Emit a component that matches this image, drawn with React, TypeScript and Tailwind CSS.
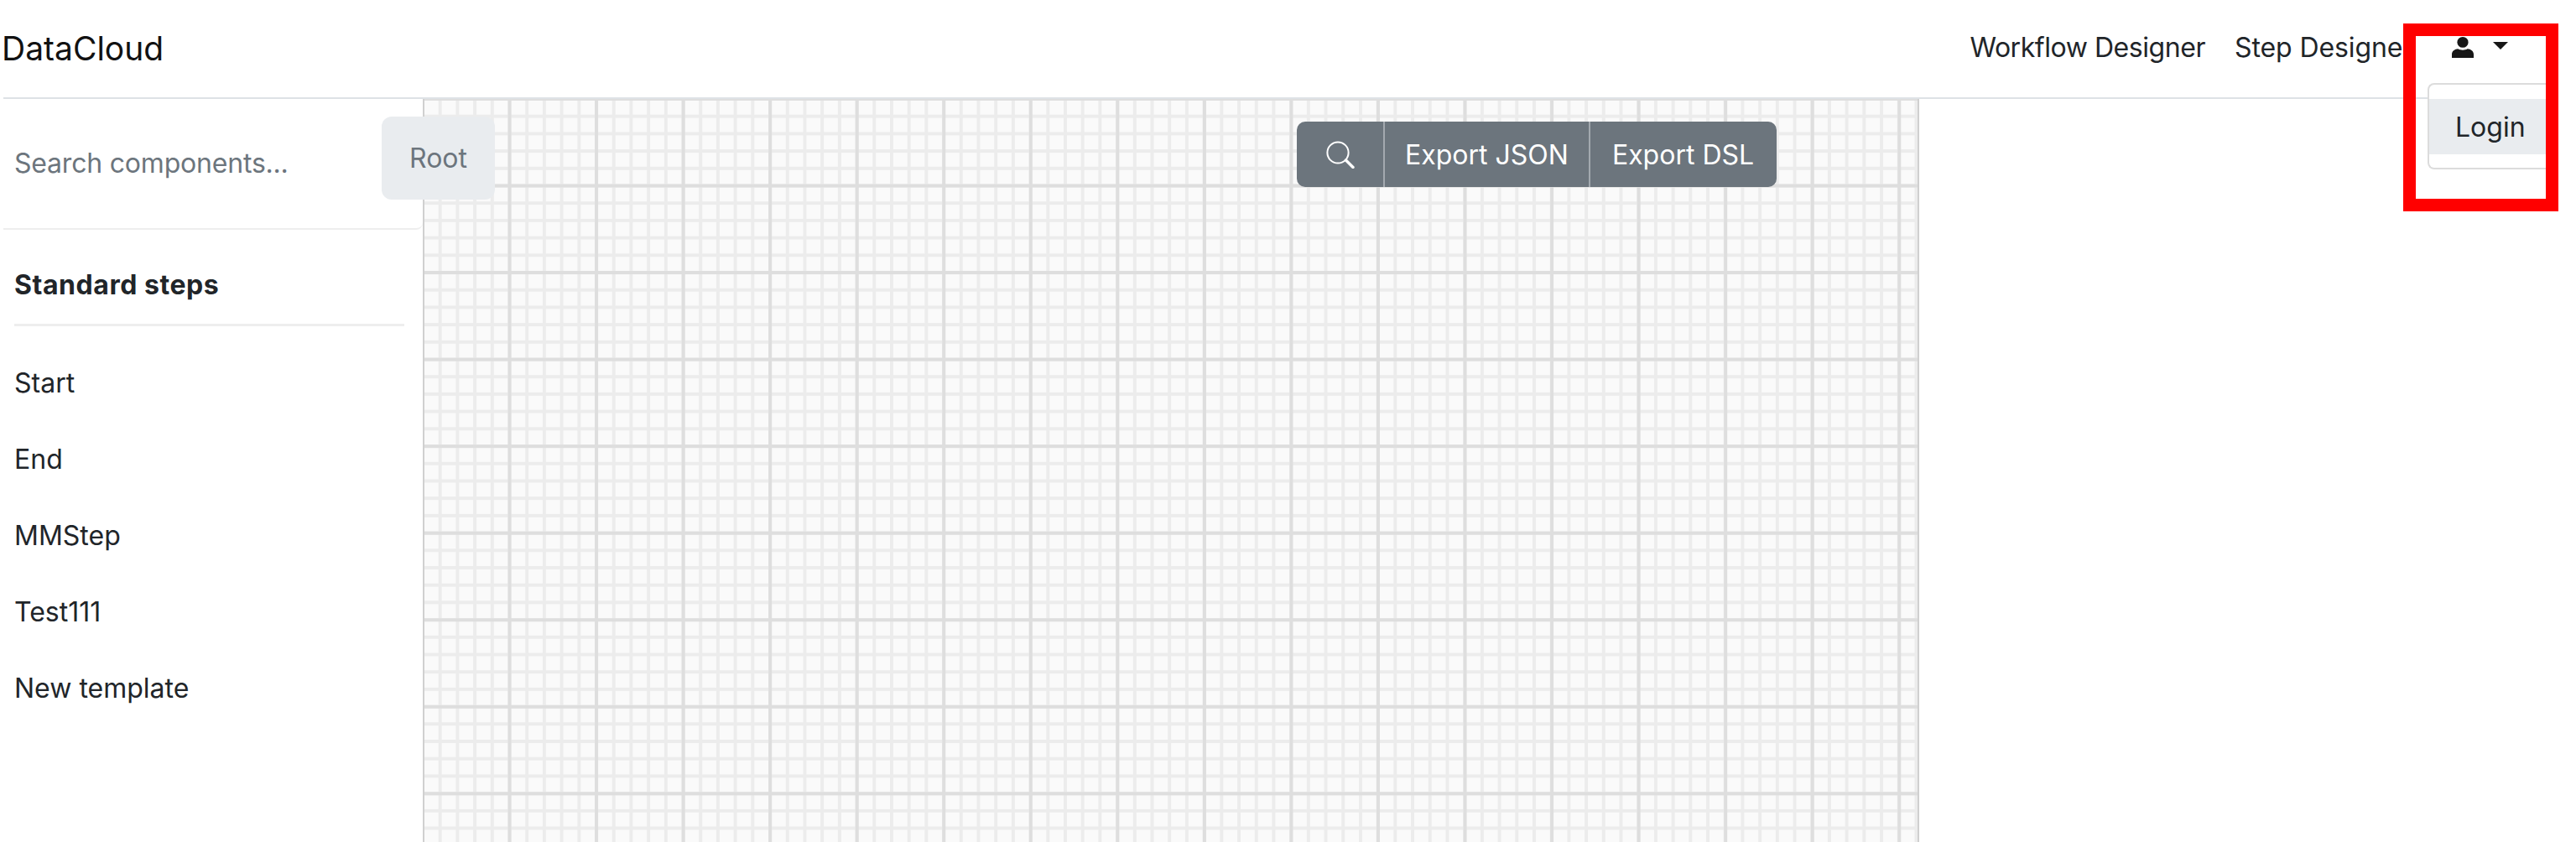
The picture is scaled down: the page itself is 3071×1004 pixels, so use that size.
import React from 'react';

const steps = ['Start', 'End', 'MMStep', 'Test111', 'New template'];

const PersonIcon = () => (
  <svg className="w-[26px] h-[25px] text-[#171717]" viewBox="0 0 26 25" fill="currentColor">
    <ellipse cx="13" cy="6.4" rx="6.6" ry="6.4" />
    <path d="M0 25v-4.2C0 17 3.4 14.6 7.4 14.3c1.6 1 3.5 1.4 5.6 1.4s4-.4 5.6-1.4c4 .3 7.4 2.7 7.4 6.5V25z" />
  </svg>
);

const Caret = () => (
  <svg className="w-[18px] h-[9px] text-[#171717]" viewBox="0 0 18 9" fill="currentColor">
    <path d="M0 0h18L9 9z" />
  </svg>
);

const SearchIcon = () => (
  <svg className="w-[34px] h-[33px] text-white" viewBox="0 0 34 33" fill="none" stroke="currentColor">
    <circle cx="14" cy="14" r="12.6" strokeWidth="2" />
    <path d="M23.5 23l8.5 8.5" strokeWidth="3.4" strokeLinecap="round" />
  </svg>
);

const Navbar = () => (
  <nav className="h-[118px] mr-[21px] pr-[60px] flex items-center justify-between border-b-2 border-[#dee2e6]">
    <span className="text-[39px] leading-none text-[#111] -ml-[2px] -mt-[1px]">DataCloud</span>
    <div className="flex items-center -mt-[2px]">
      <a className="text-[32px] tracking-[-0.45px] text-[#212529] mr-[35px]">Workflow Designer</a>
      <a className="text-[32px] tracking-[-0.1px] text-[#212529] whitespace-nowrap w-[259px]">Step Designer</a>
      <div className="flex items-start -mt-[1px]">
        <PersonIcon />
        <div className="ml-[23px] mt-[6px]">
          <Caret />
        </div>
      </div>
    </div>
  </nav>
);

const Sidebar = () => (
  <aside className="w-[500px] shrink-0">
    <div className="flex pt-[21px] pb-[34px] border-b-2 border-[#eeeeee] rounded-br-lg">
      <div className="w-[451px] shrink-0 pl-[13px] pt-[36px] text-[32px] tracking-[-0.2px] leading-[40px] text-[#6c757d]">
        Search components...
      </div>
      <div className="relative z-10 shrink-0 w-[135px] h-[99px] bg-[#e9ecef] rounded-xl flex items-center justify-center text-[32px] text-[#6c757d]">
        Root
      </div>
    </div>
    <div className="pl-[13px] pr-[22px]">
      <h6 className="pt-[45px] pb-[25px] text-[32px] tracking-[0.55px] leading-[42px] font-bold text-[#212529] border-b-[3px] border-[#eeeeee]">
        Standard steps
      </h6>
      <ul className="pt-[46px]">
        {steps.map(step => (
          <li key={step} className="h-[91px] text-[32px] leading-[44px] text-[#212529]">
            {step}
          </li>
        ))}
      </ul>
    </div>
  </aside>
);

const Canvas = () => (
  <main className="relative w-[1784px] shrink-0 border-x-2 border-[#d0d0d0] bg-[#fafafa] bg-origin-border bg-[linear-gradient(90deg,#dedede_3.5px,transparent_3.5px),linear-gradient(#dedede_3.5px,transparent_3.5px),linear-gradient(90deg,#ececec_3.5px,transparent_3.5px),linear-gradient(#ececec_3.5px,transparent_3.5px)] bg-size-[103.56px_103.56px,103.56px_103.56px,20.712px_20.712px,20.712px_20.712px] bg-position-[-2px_-2px]">
    <div className="absolute left-[1040px] top-[27px] w-[572px] h-[78px] flex bg-[#6c757d] rounded-[10px] text-[32px] text-white">
      <button className="w-[105px] flex items-center justify-center border-r-2 border-[#a3a9af]">
        <SearchIcon />
      </button>
      <button className="w-[245px] pt-[2px] flex items-center justify-center border-r-2 border-[#a3a9af]">Export JSON</button>
      <button className="flex-1 pt-[2px] pr-[1px] flex items-center justify-center">Export DSL</button>
    </div>
  </main>
);

export default function App() {
  return (
    <div className="relative h-screen w-[3071px] overflow-hidden bg-white pl-[4px] font-['Inter',sans-serif]">
      <Navbar />
      <div className="flex h-[886px]">
        <Sidebar />
        <Canvas />
      </div>

      {/* open user dropdown */}
      <div className="absolute z-20 left-[2894px] top-[99px] w-[146px] h-[103px] pt-[17px] bg-white border-2 border-r-0 border-[#dcdcdc] rounded-l-lg">
        <div className="h-[66px] bg-[#e9ecef] pl-[31px] pt-[2px] flex items-center text-[32px] text-[#212529]">Login</div>
      </div>

      {/* red annotation box */}
      <div className="absolute z-30 left-[2865px] top-[28px] w-[185px] h-[224px] border-[15px] border-[#ff0000]" />
    </div>
  );
}
